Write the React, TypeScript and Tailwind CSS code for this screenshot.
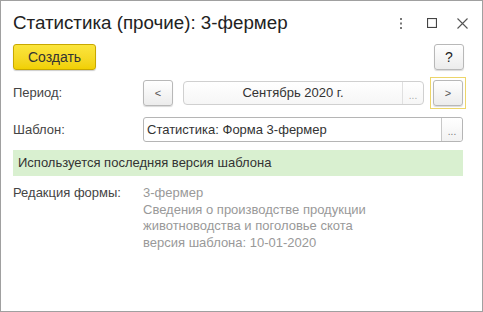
import React from 'react';

const font = { fontFamily: '"Liberation Sans", Arial, sans-serif' };

const GrayButton = ({ children }: { children: React.ReactNode }) => (
  <div className="w-[30px] h-[26px] rounded-[3px] border border-[#b8b8b8] bg-gradient-to-b from-white to-[#ececec] shadow-[0_1px_1px_rgba(0,0,0,0.15)] flex items-center justify-center text-[#333] text-[13px]">
    {children}
  </div>
);

export default function App() {
  return (
    <div className="w-[483px] h-[312px] bg-white border border-[#a0a0a0] text-[#333] relative overflow-hidden" style={font}>
      {/* Title bar */}
      <div className="flex items-center h-[42px] pl-[12px] pr-[14px]">
        <h1 className="text-[18.75px] text-[#222] leading-none flex-1 pt-[2px]">Статистика (прочие): 3-фермер</h1>
        <div className="flex items-center gap-[20px] pt-[2px]">
          <svg width="4" height="11" viewBox="0 0 4 11" className="mr-[4px]">
            <rect x="1" y="0" width="2" height="2" fill="#777" />
            <rect x="1" y="4.5" width="2" height="2" fill="#777" />
            <rect x="1" y="9" width="2" height="2" fill="#777" />
          </svg>
          <svg width="10" height="10" viewBox="0 0 10 10">
            <rect x="0.5" y="0.5" width="9" height="9" fill="none" stroke="#444" strokeWidth="1.2" />
          </svg>
          <svg width="11" height="11" viewBox="0 0 11 11">
            <path d="M0.5 0.5 L10.5 10.5 M10.5 0.5 L0.5 10.5" stroke="#555" strokeWidth="1.1" />
          </svg>
        </div>
      </div>

      {/* Command bar */}
      <div className="flex items-center justify-between pl-[12px] pr-[18px] mt-[1px]">
        <div className="w-[83px] h-[26px] rounded-[3px] border border-[#c8a800] bg-gradient-to-b from-[#fbe53c] to-[#f1d000] shadow-[0_1px_1px_rgba(0,0,0,0.2)] flex items-center justify-center text-[14px] text-[#333]">
          Создать
        </div>
        <GrayButton>
          <span className="text-[14px] text-[#222]">?</span>
        </GrayButton>
      </div>

      {/* Period */}
      <div className="flex items-center pl-[12px] pr-[16px] mt-[7px] text-[13px]">
        <div className="w-[130px] text-[#444]">Период:</div>
        <GrayButton>
          <span className="text-[11px] text-[#555]">&lt;</span>
        </GrayButton>
        <div className="ml-[10px] w-[241px] h-[24px] rounded-[4px] border border-[#d0d0d0] bg-gradient-to-b from-white to-[#f6f6f6] flex">
          <div className="flex-1 flex items-center justify-center text-[#333]">Сентябрь 2020 г.</div>
          <div className="w-[21px] border-l border-[#e0e0e0] flex items-center justify-center text-[#aaa] text-[10px] pt-[4px]">...</div>
        </div>
        <div className="ml-[6px] p-[2px] border border-[#ecd56a]">
          <GrayButton>
            <span className="text-[11px] text-[#555]">&gt;</span>
          </GrayButton>
        </div>
      </div>

      {/* Template */}
      <div className="flex items-center pl-[12px] pr-[19px] mt-[8px] text-[13px]">
        <div className="w-[130px] text-[#444]">Шаблон:</div>
        <div className="flex-1 h-[25px] rounded-[3px] border border-[#b5b5b5] bg-white flex">
          <div className="flex-1 flex items-center pl-[3px] text-[#333]">Статистика: Форма 3-фермер</div>
          <div className="w-[21px] border-l border-[#c8c8c8] flex items-center justify-center text-[#777] text-[10px] pt-[4px] bg-gradient-to-b from-white to-[#f2f2f2] rounded-r-[3px]">...</div>
        </div>
      </div>

      {/* Info bar */}
      <div className="mx-[12px] mr-[19px] mt-[8px] h-[26px] bg-[#d9f0d0] flex items-center pl-[5px] text-[13px] text-[#333]">
        Используется последняя версия шаблона
      </div>

      {/* Form edition */}
      <div className="flex pl-[12px] mt-[9px] text-[13px] leading-[16.5px]">
        <div className="w-[130px] text-[#444]">Редакция формы:</div>
        <div className="text-[#999]">
          <div>3-фермер</div>
          <div>Сведения о производстве продукции</div>
          <div>животноводства и поголовье скота</div>
          <div>версия шаблона: 10-01-2020</div>
        </div>
      </div>
    </div>
  );
}
